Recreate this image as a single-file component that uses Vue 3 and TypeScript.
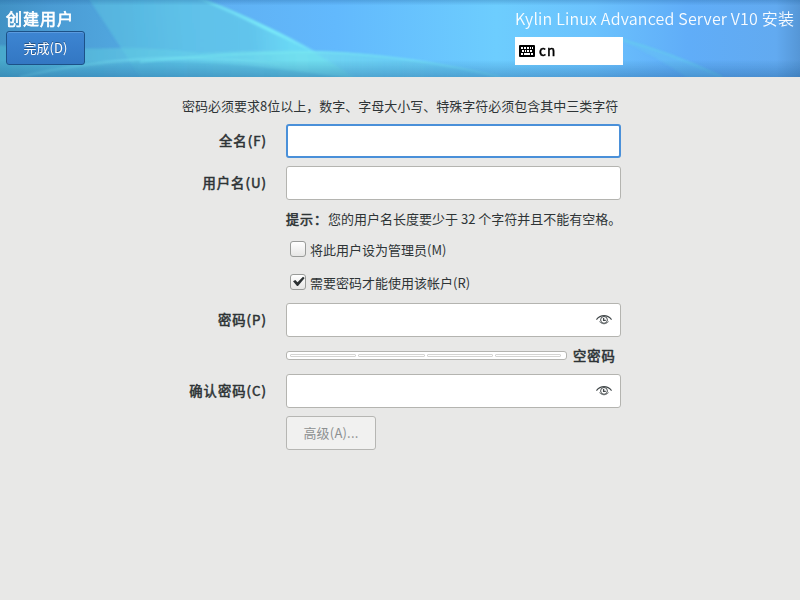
<script setup lang="ts">
import { ref } from 'vue'

const fullName = ref('')
const userName = ref('')
const password = ref('')
const confirmation = ref('')
const isAdmin = ref(false)
const needsPassword = ref(true)
const segments = [1, 2, 3, 4]
</script>

<template>
  <div class="screen">
    <header class="banner">
      <svg class="backdrop" viewBox="0 0 800 77" preserveAspectRatio="none" aria-hidden="true">
        <defs>
          <linearGradient id="sky" x1="0" x2="1" y1="0" y2="0">
            <stop offset="0" stop-color="#4191c4" />
            <stop offset="0.06" stop-color="#4a9bd3" />
            <stop offset="0.13" stop-color="#4fa4dc" />
            <stop offset="0.26" stop-color="#5fb0f2" />
            <stop offset="0.42" stop-color="#62b9fd" />
            <stop offset="0.62" stop-color="#6dcdfe" />
            <stop offset="0.74" stop-color="#6bc2fd" />
            <stop offset="0.86" stop-color="#60adf8" />
            <stop offset="0.97" stop-color="#62aaf0" />
            <stop offset="1" stop-color="#5596d6" />
          </linearGradient>
          <linearGradient id="ray" gradientUnits="userSpaceOnUse" x1="90" x2="290" y1="50" y2="30">
            <stop offset="0" stop-color="#55b4dd" />
            <stop offset="0.5" stop-color="#5fc4e9" />
            <stop offset="0.8" stop-color="#62c6ec" />
            <stop offset="1" stop-color="#6cdcf4" />
          </linearGradient>
          <linearGradient id="rim" x1="0" x2="1" y1="0" y2="0">
            <stop offset="0" stop-color="#7df0fa" stop-opacity="0.35" />
            <stop offset="0.6" stop-color="#7df0fa" stop-opacity="0.8" />
            <stop offset="1" stop-color="#7df0fa" stop-opacity="0.4" />
          </linearGradient>
          <linearGradient id="wave" x1="0" x2="1" y1="0" y2="0">
            <stop offset="0" stop-color="#4fb8d0" stop-opacity="0.6" />
            <stop offset="0.35" stop-color="#66cfe8" stop-opacity="0.6" />
            <stop offset="0.6" stop-color="#74e0ee" stop-opacity="0.8" />
            <stop offset="1" stop-color="#62c4ef" stop-opacity="0.5" />
          </linearGradient>
          <linearGradient id="shade" x1="0" x2="0" y1="0" y2="1">
            <stop offset="0" stop-color="#1f5c96" stop-opacity="0.28" />
            <stop offset="0.07" stop-color="#1f5c96" stop-opacity="0" />
            <stop offset="0.78" stop-color="#1f5c96" stop-opacity="0" />
            <stop offset="1" stop-color="#1f5c96" stop-opacity="0.36" />
          </linearGradient>
          <filter id="soft" x="-5%" y="-20%" width="110%" height="140%">
            <feGaussianBlur stdDeviation="0.8" />
          </filter>
        </defs>
        <rect width="800" height="77" fill="url(#sky)" />
        <g filter="url(#soft)">
          <path d="M87 -4H198Q236 11 268 27Q310 48 358 80H142Z" fill="url(#ray)" opacity="0.9" />
          <path d="M206 0Q236 11 268 27Q290 37 317 52L312 52Q288 40 266 30Q232 13 196 -2Z" fill="url(#rim)" />
          <path d="M-4 45Q55 50 120 48Q160 48 200 53Q260 50 320 51Q410 54 506 80H-4Z" fill="url(#wave)" />
          <path d="M40 80Q90 64 150 62Q230 60 360 80Z" fill="#4aa9d6" opacity="0.35" />
          <path d="M20 77Q80 63 140 59Q200 55 280 64" fill="none" stroke="#79e2f2" stroke-width="1.5" opacity="0.6" />
          <path d="M140 62Q220 53 320 52Q410 55 500 77" fill="none" stroke="#7ef0f6" stroke-width="1.5" opacity="0.55" />
          <path d="M616 38Q670 52 726 80H690Q660 58 616 38Z" fill="#67c9f2" opacity="0.35" />
          <path d="M616 38Q670 52 722 77" fill="none" stroke="#66d6e9" stroke-width="1.6" opacity="0.6" />
        </g>
        <rect width="800" height="77" fill="url(#shade)" />
      </svg>
      <div class="banner-left">
        <h1 class="title">创建用户</h1>
        <button class="done" type="button">完成(D)</button>
      </div>
      <div class="banner-right">
        <div class="product">Kylin Linux Advanced Server V10 安装</div>
        <div class="keyboard">
          <svg width="16" height="12" viewBox="0 0 16 12" aria-hidden="true">
            <rect width="16" height="12" rx="1" fill="#000" />
            <path d="M2 2h2v2H2zM5 2h2v2H5zM8 2h2v2H8zM11 2h1v2h-1zM13 2h1v2h-1zM3 5h2v2H3zM6 5h1v2H6zM8 5h2v2H8zM11 5h2v2h-2zM2 8h2v2H2zM5 8h6v2H5zM12 8h2v2h-2z" fill="#fff" shape-rendering="crispEdges" />
          </svg>
          <span class="layout-name">cn</span>
        </div>
      </div>
    </header>

    <form class="form" @submit.prevent>
      <p class="intro">密码必须要求8位以上，数字、字母大小写、特殊字符必须包含其中三类字符</p>

      <label class="name" for="full">全名(F)</label>
      <input id="full" v-model="fullName" class="entry focused" type="text" />

      <label class="name" for="user">用户名(U)</label>
      <input id="user" v-model="userName" class="entry" type="text" />

      <p class="tip"><b>提示：</b>您的用户名长度要少于 32 个字符并且不能有空格。</p>

      <label class="check">
        <input v-model="isAdmin" class="native" type="checkbox" />
        <span class="box"></span>
        <span>将此用户设为管理员(M)</span>
      </label>

      <label class="check">
        <input v-model="needsPassword" class="native" type="checkbox" />
        <span class="box">
          <svg v-if="needsPassword" width="14" height="14" viewBox="0 0 14 14" aria-hidden="true">
            <path d="M2 6.2L4.3 4.9L6.5 7.2L12 1.7L13.7 3.1L7 10.9H6Z" fill="#2b3032" />
          </svg>
        </span>
        <span>需要密码才能使用该帐户(R)</span>
      </label>

      <label class="name" for="pass">密码(P)</label>
      <div class="entry with-icon">
        <input id="pass" v-model="password" class="inner" type="password" />
        <svg class="eye" width="16" height="12" viewBox="0 0 16 12" fill="none" stroke="#43494b" aria-hidden="true">
          <path d="M.4 5.6Q3.6 1.6 8 1.6T15.6 5.6" stroke-width="1.2" />
          <path d="M3.2 7.4Q5.2 9.9 8 9.9T12.8 7.4" stroke-width=".6" />
          <circle cx="8" cy="5.9" r="3.4" stroke-width="1" />
          <path d="M7.6 4V6.3H9.8" stroke-width="1.3" />
        </svg>
      </div>

      <div class="strength">
        <div class="level">
          <span v-for="n in segments" :key="n" class="segment"></span>
        </div>
        <span class="strength-text">空密码</span>
      </div>

      <label class="name" for="confirm">确认密码(C)</label>
      <div class="entry with-icon">
        <input id="confirm" v-model="confirmation" class="inner" type="password" />
        <svg class="eye" width="16" height="12" viewBox="0 0 16 12" fill="none" stroke="#43494b" aria-hidden="true">
          <path d="M.4 5.6Q3.6 1.6 8 1.6T15.6 5.6" stroke-width="1.2" />
          <path d="M3.2 7.4Q5.2 9.9 8 9.9T12.8 7.4" stroke-width=".6" />
          <circle cx="8" cy="5.9" r="3.4" stroke-width="1" />
          <path d="M7.6 4V6.3H9.8" stroke-width="1.3" />
        </svg>
      </div>

      <button class="advanced" type="button" disabled>高级(A)...</button>
    </form>
  </div>
</template>

<style>
body {
  margin: 0;
  background: #e8e8e7;
}
</style>

<style scoped>
.screen {
  box-sizing: border-box;
  width: 800px;
  height: 600px;
  overflow: hidden;
  background: #e8e8e7;
  color: #2e3436;
  font-family: "Noto Sans CJK SC", "Noto Sans", sans-serif;
  font-size: 13px;
  line-height: 20px;
  white-space: nowrap;
}

.banner {
  position: relative;
  display: flex;
  justify-content: space-between;
  box-sizing: border-box;
  height: 77px;
  padding: 6px 6px 0;
  color: #fff;
}

.backdrop {
  position: absolute;
  inset: 0;
  width: 100%;
  height: 100%;
}

.banner-left,
.banner-right {
  position: relative;
  display: flex;
  flex-direction: column;
  align-items: flex-start;
}

.banner-right {
  width: 279px;
}

.title {
  margin: 0;
  height: 25px;
  font-size: 16px;
  line-height: 24px;
  font-weight: 400;
  letter-spacing: 1px;
  -webkit-text-stroke: 0.7px currentColor;
}

.done {
  box-sizing: border-box;
  width: 79px;
  height: 34px;
  padding: 0 0 1px;
  border: 1px solid #1c5187;
  border-radius: 3px;
  background: linear-gradient(#3d85d2, #3377c3);
  box-shadow: inset 0 1px #5a9ade;
  color: #fff;
  font: inherit;
  letter-spacing: 0.1px;
  text-shadow: 0 -1px rgba(0, 0, 0, 0.35);
}

.product {
  height: 31px;
  font-size: 16px;
  line-height: 25px;
  font-weight: 350;
  letter-spacing: 0.18px;
  opacity: 0.95;
}

.keyboard {
  display: flex;
  align-items: center;
  gap: 4px;
  box-sizing: border-box;
  width: 108px;
  height: 28px;
  padding-left: 4px;
  background: #fff;
  color: #000;
}

.layout-name {
  padding-bottom: 2px;
  font-size: 13.6px;
  letter-spacing: 1px;
  -webkit-text-stroke: 0.5px currentColor;
}

.form {
  display: grid;
  grid-template-columns: 84px 335px;
  grid-template-rows: 20px 34px 34px 22px 24px 25px 34px 21px 34px 34px;
  gap: 8px 20px;
  align-items: center;
  padding: 19px 0 0 182px;
}

.intro,
.tip {
  margin: 0;
}

.intro {
  grid-column: 1 / 3;
}

.name,
.strength-text,
.tip b {
  font-weight: 400;
  letter-spacing: 1px;
  -webkit-text-stroke: 0.55px currentColor;
}

.name {
  justify-self: end;
  margin-right: -1px;
}

.name,
.strength-text {
  font-size: 13.3px;
}

.entry {
  box-sizing: border-box;
  width: 335px;
  height: 34px;
  border: 1px solid #b4b4b0;
  border-radius: 3px;
  background: #fff;
  outline: none;
}

.focused {
  border: 2px solid #4a90d9;
}

.tip,
.check,
.strength,
.advanced {
  grid-column: 2;
}

.check {
  display: flex;
  align-items: center;
  gap: 4px;
  padding-left: 4px;
}

.native {
  display: none;
}

.box {
  box-sizing: border-box;
  width: 16px;
  height: 16px;
  margin-top: -2px;
  border: 1px solid #999b99;
  border-radius: 3px;
  background: linear-gradient(#fff, #e6e6e5);
}

.box svg {
  display: block;
}

.with-icon {
  display: flex;
  align-items: center;
  padding-right: 8px;
}

.inner {
  flex: 1;
  min-width: 0;
  padding: 0 8px;
  border: 0;
  background: none;
  outline: none;
}

.strength {
  display: flex;
  align-items: center;
  gap: 6px;
}

.level {
  display: flex;
  gap: 2px;
  box-sizing: border-box;
  width: 281px;
  height: 9px;
  padding: 2px 5px 2px 3px;
  border: 1px solid #b4b4b0;
  border-radius: 3px;
  background: #fff;
}

.segment {
  box-sizing: border-box;
  flex: 1;
  height: 3px;
  border: 1px solid #d4d4d2;
  border-radius: 1px;
}

.advanced {
  box-sizing: border-box;
  width: 90px;
  height: 34px;
  padding: 0;
  border: 1px solid #b6b6b3;
  border-radius: 3px;
  background: #f1f1f0;
  color: #8d9091;
  font: inherit;
  letter-spacing: 0.2px;
}
</style>
